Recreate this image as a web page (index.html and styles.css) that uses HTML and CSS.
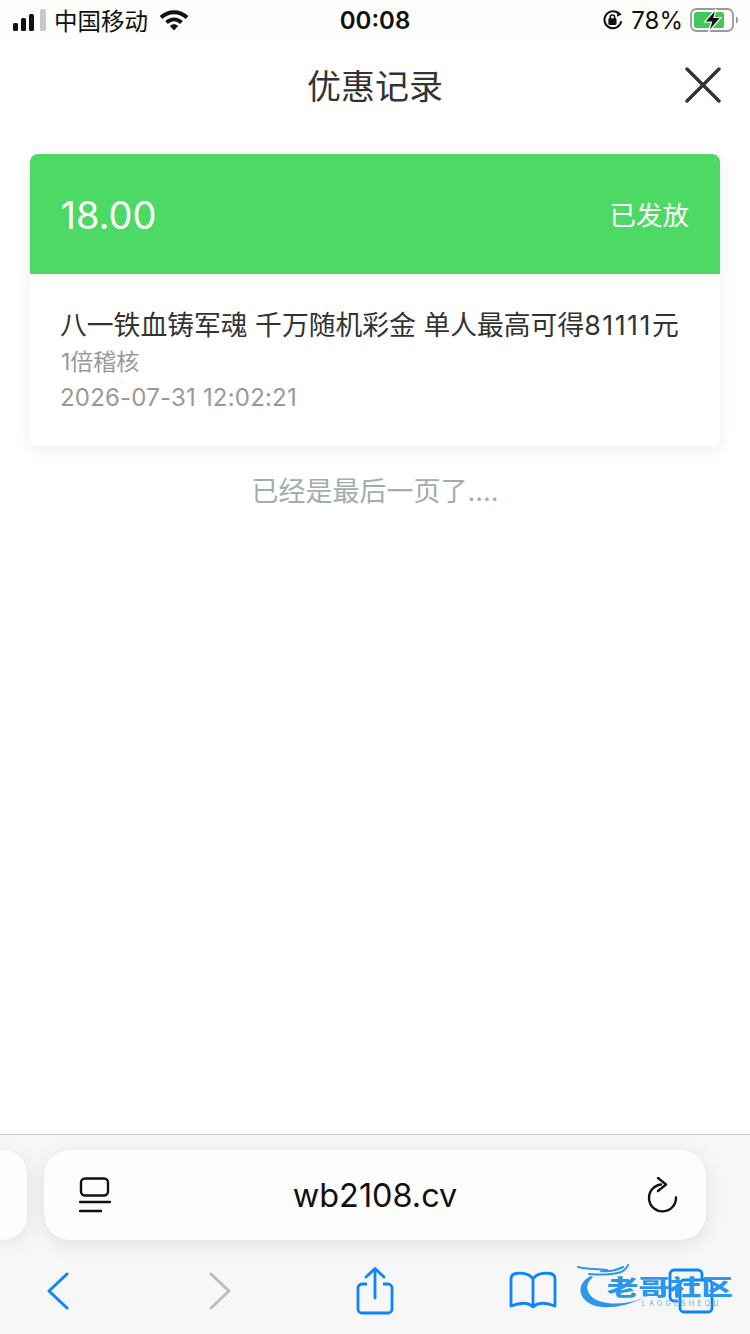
FILE: index.html
```html
<!DOCTYPE html>
<html lang="zh-CN">

<head>
    <meta charset="UTF-8">
    <meta name="viewport" content="width=device-width, initial-scale=1.0">
    <title>优惠记录</title>
    <link rel="stylesheet" href="styles.css">
</head>

<body>
    <div class="page">
        <div class="status-bar">
            <div class="status-left">
                <svg class="signal" width="34" height="22" viewBox="0 0 34 22">
                    <rect x="0" y="14" width="5" height="8" rx="1.5" fill="#111" />
                    <rect x="8" y="9" width="5" height="13" rx="1.5" fill="#111" />
                    <rect x="16" y="5" width="5" height="17" rx="1.5" fill="#111" />
                    <rect x="27" y="0" width="6" height="22" rx="1.5" fill="#c9c9c9" />
                </svg>
                <span class="carrier">中国移动</span>
                <svg class="wifi" width="30" height="22" viewBox="0 0 30 22">
                    <path d="M2 8.500C9.500 1.500 20.500 1.500 28 8.500" fill="none" stroke="#111" stroke-width="4" />
                    <path d="M7.500 13.500C12 9.500 18 9.500 22.500 13.500" fill="none" stroke="#111" stroke-width="4" />
                    <path d="M10.800 17 15 21.500 19.200 17C16.700 14.800 13.300 14.800 10.800 17Z" fill="#111" />
                </svg>
            </div>
            <div class="status-time">00:08</div>
            <div class="status-right">
                <svg class="lock" width="22" height="22" viewBox="0 0 20 20">
                    <path d="M17.500 11A7.700 7.700 0 1 1 15 4" fill="none" stroke="#111" stroke-width="1.800" />
                    <path d="M14 1.500 18 5 13.500 7Z" fill="#111" />
                    <rect x="5.800" y="8.500" width="7.400" height="6" rx="1" fill="#111" />
                    <path d="M7.500 9V7.500a2 2 0 0 1 4 0V9" fill="none" stroke="#111" stroke-width="1.400" />
                </svg>
                <span class="battery-text">78%</span>
                <svg class="battery" width="49" height="24" viewBox="0 0 49 24">
                    <rect x="1" y="1" width="42" height="22" rx="5.500" fill="none" stroke="#9a9a9a" stroke-width="1.800" />
                    <rect x="4" y="4" width="30" height="16" rx="2.500" fill="#3fc95a" />
                    <path d="M46 8.500c1.500.5 2 2 2 3.500s-.5 3-2 3.500Z" fill="#9a9a9a" />
                    <path d="M26 1 14.500 14H21.500L18.500 24 31 9.500H24Z" fill="#111" stroke="#fdfdfb" stroke-width="1.200" />
                </svg>
            </div>
        </div>

        <div class="header">
            <h1>优惠记录</h1>
            <svg class="close" width="36" height="36" viewBox="0 0 36 36">
                <path d="M2 2 34 34M34 2 2 34" fill="none" stroke="#333" stroke-width="3.400" stroke-linecap="round" />
            </svg>
        </div>

        <div class="content">
            <div class="record-card">
                <div class="record-top">
                    <span class="amount">18.00</span>
                    <span class="state">已发放</span>
                </div>
                <div class="record-body">
                    <div class="record-title">八一铁血铸军魂 千万随机彩金 单人最高可得<span class="num">81111</span>元</div>
                    <div class="record-sub">1倍稽核</div>
                    <div class="record-date">2026-07-31 12:02:21</div>
                </div>
            </div>
            <div class="end-note">已经是最后一页了....</div>
        </div>

        <div class="browser-bar">
            <div class="address-row">
                <div class="prev-tab"></div>
                <div class="address">
                    <svg width="32" height="36" viewBox="0 0 32 36">
                        <rect x="2" y="1.500" width="27" height="17" rx="4" fill="none" stroke="#111" stroke-width="2.400" />
                        <path d="M1 25H31M1 34H22" fill="none" stroke="#111" stroke-width="2.400" stroke-linecap="round" />
                    </svg>
                    <span class="url">wb2108.cv</span>
                    <svg class="reload" width="32" height="36" viewBox="0 0 32 36">
                        <path d="M15 7.500A13.500 13.500 0 1 0 30 20.500" fill="none" stroke="#111" stroke-width="2.400" stroke-linecap="round" />
                        <path d="M12 1 20 7.500 12 14" fill="none" stroke="#111" stroke-width="2.400" stroke-linecap="round" stroke-linejoin="round" />
                    </svg>
                </div>
            </div>
            <div class="toolbar">
                <svg width="22" height="38" viewBox="0 0 22 38">
                    <path d="M20 2 2 19 20 36" fill="none" stroke="#0a84ff" stroke-width="3" stroke-linecap="round" stroke-linejoin="round" />
                </svg>
                <svg width="22" height="38" viewBox="0 0 22 38">
                    <path d="M2 2 20 19 2 36" fill="none" stroke="#bdbdbd" stroke-width="3" stroke-linecap="round" stroke-linejoin="round" />
                </svg>
                <svg width="38" height="48" viewBox="0 0 38 48">
                    <path d="M11 17H6a4 4 0 0 0-4 4V42a4 4 0 0 0 4 4H32a4 4 0 0 0 4-4V21a4 4 0 0 0-4-4H27" fill="none" stroke="#0a84ff" stroke-width="2.800" />
                    <path d="M19 31V2M10 10 19 1.500 28 10" fill="none" stroke="#0a84ff" stroke-width="2.800" stroke-linecap="round" stroke-linejoin="round" />
                </svg>
                <svg width="48" height="40" viewBox="0 0 48 40">
                    <path d="M24 36C20 32 12 31 2 35V8C2 5 4 3 7 2.500 13 1.500 21 2.500 24 8 27 2.500 35 1.500 41 2.500 44 3 46 5 46 8V35C36 31 28 32 24 36ZM24 8V36" fill="none" stroke="#0a84ff" stroke-width="2.800" stroke-linejoin="round" />
                </svg>
                <svg width="46" height="46" viewBox="0 0 46 46">
                    <path d="M10 33H6a4 4 0 0 1-4-4V6a4 4 0 0 1 4-4H30a4 4 0 0 1 4 4V11" fill="none" stroke="#0a84ff" stroke-width="2.800" />
                    <rect x="12" y="12" width="32" height="32" rx="4" fill="none" stroke="#0a84ff" stroke-width="2.800" />
                </svg>
            </div>
            <div class="watermark">
                <svg class="watermark-logo" width="70" height="50" viewBox="0 0 70 50">
                    <path d="M14 14C3 19 0 30 8 38 18 48 42 48 66 36 46 44 24 43 15 35 8 28 9 21 16 15Z" fill="#2c97ea" />
                    <path d="M1 5C12 8 20 6 30 8M12 12C22 13 34 13 44 10 48 8 50 6 51 3M24 9C32 10 40 8 46 5" fill="none" stroke="#2c97ea" stroke-width="2" stroke-linecap="round" />
                </svg>
                <div class="watermark-text">
                    <span class="watermark-name">老哥社区</span>
                    <span class="watermark-sub">LAOGESHEQU</span>
                </div>
            </div>
        </div>
    </div>
</body>

</html>
```

FILE: styles.css
```css
html,
body {
    margin: 0;
    padding: 0;
}

body {
    font-family: Inter, "Noto Sans CJK SC", sans-serif;
    background-color: #fff;
    color: #333;
}

.page {
    position: relative;
    width: 750px;
    height: 1334px;
    display: flex;
    flex-direction: column;
    overflow: hidden;
}

.status-bar {
    height: 40px;
    flex: none;
    background-color: #fdfdfb;
    color: #111;
    display: grid;
    grid-template-columns: 1fr auto 1fr;
    align-items: center;
}

.status-left {
    display: flex;
    align-items: center;
    padding-left: 13px;
}

.signal {
    margin-right: 7px;
}

.carrier {
    font-size: 23.500px;
    margin-right: 11px;
}

.status-time {
    font-size: 24px;
    font-weight: 600;
}

.status-right {
    display: flex;
    align-items: center;
    justify-content: flex-end;
    padding-right: 11px;
}

.battery-text {
    font-size: 24px;
    margin: 0 7px;
}

.header {
    position: relative;
    height: 90px;
    flex: none;
    box-sizing: border-box;
    padding-bottom: 2px;
    display: flex;
    align-items: center;
    justify-content: center;
}

.header h1 {
    margin: 0;
    font-size: 34px;
    font-weight: 400;
    color: #333;
}

.close {
    position: absolute;
    right: 29px;
    top: 27px;
}

.content {
    flex: 1;
    padding: 24px 30px 0;
}

.record-card {
    background: #fff;
    border-radius: 8px;
    overflow: hidden;
    box-shadow: 0 4px 20px rgba(0, 0, 0, 0.07);
}

.record-top {
    height: 120px;
    box-sizing: border-box;
    padding: 2px 31px 0 30.500px;
    background-color: #4cd964;
    color: #fff;
    display: flex;
    align-items: center;
    justify-content: space-between;
}

.amount {
    font-size: 38px;
}

.state {
    margin-bottom: 4px;
    font-size: 26.500px;
}

.record-body {
    height: 172px;
    box-sizing: border-box;
    padding: 31px 30px 0;
}

.record-title {
    font-size: 26.800px;
    line-height: 40px;
    color: #333;
    white-space: nowrap;
}

.num {
    letter-spacing: 1.500px;
}

.record-sub {
    padding-left: 1px;
    font-size: 23px;
    line-height: 34px;
    color: #999;
}

.record-date {
    font-size: 24px;
    line-height: 38px;
    letter-spacing: 0.200px;
    color: #999;
}

.end-note {
    margin-top: 28px;
    text-align: center;
    font-size: 27px;
    line-height: 36px;
    color: #a3adab;
}

.browser-bar {
    height: 200px;
    flex: none;
    box-sizing: border-box;
    border-top: 1px solid #c4c4c4;
    background-color: #f7f7f7;
    padding-top: 15px;
}

.address-row {
    display: flex;
    gap: 17px;
}

.prev-tab {
    width: 27px;
    height: 90px;
    background: #fdfdfd;
    border-radius: 0 24px 24px 0;
    box-shadow: 0 4px 20px rgba(0, 0, 0, 0.1);
}

.address {
    width: 662px;
    height: 90px;
    box-sizing: border-box;
    padding: 0 35px;
    background: #fdfdfd;
    border-radius: 26px;
    box-shadow: 0 4px 20px rgba(0, 0, 0, 0.1);
    display: grid;
    grid-template-columns: 1fr auto 1fr;
    align-items: center;
}

.url {
    font-size: 32.400px;
    color: #111;
}

.reload {
    justify-self: end;
    margin-right: -7px;
}

.toolbar {
    display: grid;
    grid-template-columns: 115px 210px 100px 216px 100px;
    justify-items: center;
    align-items: center;
    height: 46px;
    margin-top: 27px;
}

.watermark {
    position: absolute;
    left: 577px;
    top: 1262px;
    display: flex;
    filter: blur(0.5px);
}

.watermark-logo {
    flex: none;
}

.watermark-text {
    display: flex;
    flex-direction: column;
    align-items: flex-start;
    margin: 14px 0 0 -40px;
}

.watermark-name {
    width: 90px;
    font-size: 22px;
    line-height: 22px;
    font-weight: 900;
    white-space: nowrap;
    color: #2c97ea;
    transform: scaleX(1.430);
    transform-origin: left center;
}

.watermark-sub {
    margin: 2px 0 0 35px;
    font-size: 7px;
    line-height: 8px;
    letter-spacing: 3.200px;
    white-space: nowrap;
    color: #5fb0ee;
}
```
